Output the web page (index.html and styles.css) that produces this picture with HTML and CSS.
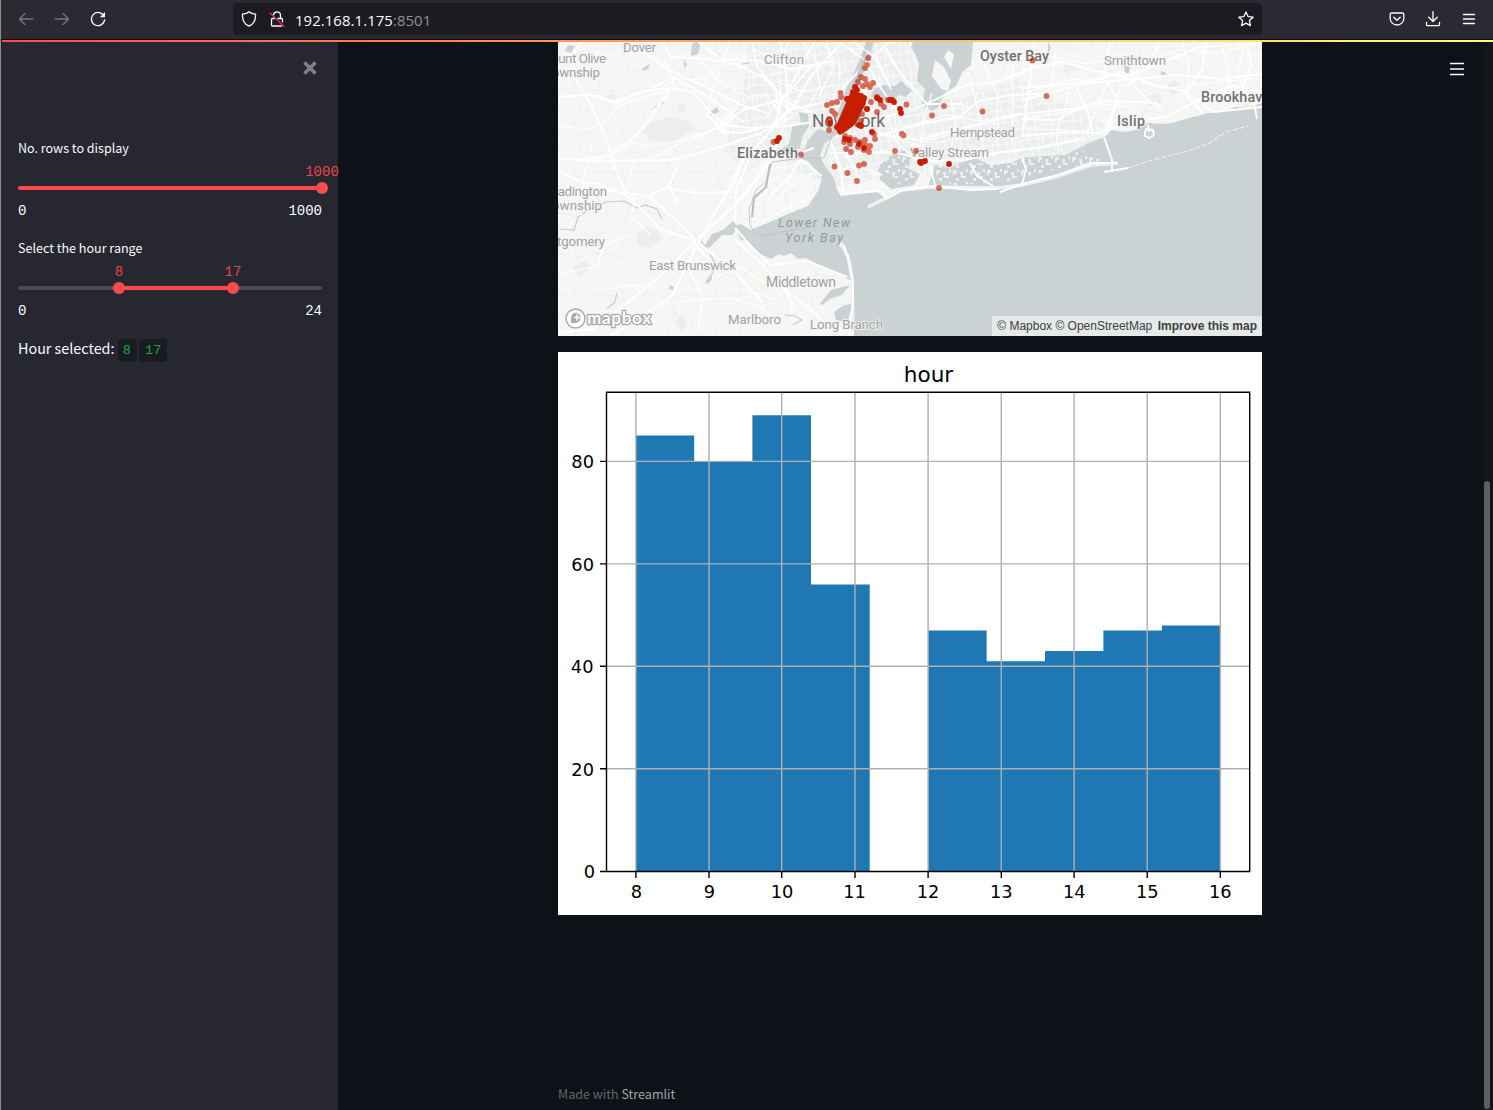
FILE: index.html
```html
<!DOCTYPE html>
<html lang="en">
<head>
<meta charset="utf-8">
<title>192.168.1.175:8501</title>
<link rel="stylesheet" href="styles.css">
</head>
<body>
<header class="toolbar">
  <div class="nav-icons">
    <svg class="icon dim" viewBox="0 0 16 16"><path d="M15 8H1.5M7 2.500 1.500 8 7 13.500"/></svg>
    <svg class="icon dim" viewBox="0 0 16 16"><path d="M1 8h13.500M9 2.500 14.500 8 9 13.500"/></svg>
    <svg class="icon" viewBox="0 0 16 16"><path d="M14 5.200A6.600 6.600 0 1 0 14.600 8.800"/><path class="solid" d="M15 1v5.200H9.800z"/></svg>
  </div>
  <div class="address">
    <svg class="icon" viewBox="0 0 16 16"><path d="M8 .8C6.500 2.200 4 2.900 1.500 3.200c-.3 5 1 9.500 6.500 12 5.500-2.500 6.800-7 6.500-12C12 2.900 9.500 2.200 8 .8z"/></svg>
    <svg class="icon lock" viewBox="0 0 16 16"><path d="M4.500 4C5 0 11.300-.3 11.500 4.300V7.500M9 7.500h3.500q1 0 1 1V11M5.500 7.500h-2q-1 0-1 1V14q0 1 1 1h9"/><path class="slash" d="m1 2 14 13.500"/></svg>
    <span class="url">192.168.1.175<span class="port">:8501</span></span>
    <svg class="icon star" viewBox="0 0 16 16"><path d="m8 1 2.100 4.600 5 .6-3.700 3.400 1 5L8 12.100l-4.400 2.500 1-5L.9 6.200l5-.6z"/></svg>
  </div>
  <div class="tools">
    <svg class="icon" viewBox="0 0 16 16"><path d="M2.500 2h11q1.300 0 1.300 1.300V7.500a6.800 6.500 0 0 1-13.600 0V3.300Q1.200 2 2.500 2zM4.800 6.200 8 9.200l3.200-3"/></svg>
    <svg class="icon" viewBox="0 0 16 16"><path d="M8 0v10.500M3.700 6.300 8 10.500l4.300-4.200M1.500 11.500v2q0 1.200 1.200 1.200h10.600q1.200 0 1.200-1.200v-2"/></svg>
    <svg class="icon" viewBox="0 0 16 16"><path d="M2.500 3.500h11M2.500 8h11M2.500 12.500h11"/></svg>
  </div>
</header>
<div class="decoration"></div>

<div class="app">
  <aside class="sidebar">
    <div class="close-row"><svg class="close" viewBox="0 0 14 14"><path d="m1.500 1.500 11 11m0-11-11 11"/></svg></div>
    <section class="slider">
      <div class="label">No. rows to display</div>
      <div class="track full"><span class="thumb end"><b>1000</b></span></div>
      <div class="bounds"><span>0</span><span>1000</span></div>
    </section>
    <section class="slider">
      <div class="label">Select the hour range</div>
      <div class="track range"><span class="thumb low"><b>8</b></span><span class="thumb high"><b>17</b></span></div>
      <div class="bounds"><span>0</span><span>24</span></div>
    </section>
    <p class="result">Hour selected: <code>8</code> <code>17</code></p>
  </aside>

  <main class="content">
    <div class="map">
      <svg class="canvas" viewBox="558 42 704 294">
        <defs>
          <pattern id="rural" width="47" height="41" patternUnits="userSpaceOnUse"><path class="local" d="M0 8 13 13 24 8 47 8M13 13 17 28 10 41M17 28 32 31 47 25M32 31 36 41M10 0 13 13M36 0 34 9"/></pattern>
          <pattern id="urban" width="23" height="21" patternUnits="userSpaceOnUse" patternTransform="rotate(-9)"><path class="street" d="M0 5H23M0 13 12 15 23 13M5 0 7 21M15 0 13 21M19 0v13"/></pattern>
          <pattern id="marsh" width="17" height="13" patternUnits="userSpaceOnUse"><path class="marsh" d="M1 1h4v3H3v2H1zM8 3h3v4h3v2H9zM4 9h3v3H4zM14 0h2v3h-2z"/></pattern>
        </defs>
        <rect class="land" x="558" y="42" width="704" height="294"/>
        <rect x="558" y="42" width="704" height="294" fill="url(#rural)"/>
        <g class="park">
          <path d="M650 123l18-6 22 4 4 8-20 13-24-1-6-9zM636 235l10-8 12 3 4 9-13 9-11-2zM573 267l13-7 5 8-13 9zM675 322l7-8 5 9-6 10zM677 106l6-4 4 8-8 3zM602 98l10-5 4 6-12 4zM1147 96l12-4 3 11-14 3zM1168 84l8-5 7 11-12 6zM1064 65l13-2 3 7-16 2zM696 235l8 3-2 8-9-3zM1236 111l9-8 9 5-5 13-13-1z"/>
        </g>
        <path class="built" d="M748 42h160l18 58 38-2 55-20 28 18 45 18 16 15-25 24-60 5-90 10-102 20-24-13-35-20-24 16-24-18 20-70z"/>
        <path d="M748 42h160l18 58 38-2 55-20 28 18 45 18 16 15-25 24-60 5-90 10-50 30-50-3-35 20-50 14-10-60-24-18 20-70z" fill="url(#urban)"/>

        <g class="water">
          <path d="M735 226 740 239 749 243 758 253 771 259 779 254 784 256 791 253 798 259 806 258 820 266 840 275 852 281 847 254 838 244 842 242 848 254 852 270 854 300 854 336H1262V103L1247 108 1235 107 1222 112 1208 113 1202 115 1189 118 1172 123 1163 124 1149 123 1136 130 1125 132 1112 130 1104 137 1089 143 1065 155 1045 156 1022 158 1010 163 990 165 975 158 960 163 950 168 935 165 928 187 905 188 887 199 877 192 841 196 837 190 834 178 825 166 820 156 824 144 837 134 838 128 828 132 818 129 808 140 803 152 800 159 808 161 816 170 822 179 818 191 808 206 788 214 770 222 751 230 741 224z"/>
          <path d="M866 42h8l-6 20-11 27-12 23-7 20-7-4 6-13 10-28 12-26zM793 124h8l-2-12 9 2 1 12-7 11-2 11-11 6-12-2 12-8zM913 42h60l-2 23-8 6-7 15-11 7-7 14-6 4-10-7 3-15-8-8 2-17-4-10-4-7zM874 89l10-4 10 1 8-5 5 6 5 3-6 7-8-2-4 8-9-3-5 4-9-8zM880 165l13-11 12-4 7 7-4 12 12 5-6 11-23 4-14-12z"/>
          <path d="M738 227l-6 8-10 0-13 13-4-3 7-11 11-4 10-9zM692 44l4-2h5l-3 12-7 2zM710 112l7-5 2 5-8 4zM643 68l7-4-2 5-6 2zM568 45l7 1-4 7-6-2zM670 285l4 2-1 3-4-1zM705 282l6-7 1 4-4 5zM684 59l3 6-3 3zM1124 65l6 2-1 6-4 2zM1161 71l5 2 1 4-6-2zM1048 42l3 5-3 7z"/>
          <path d="M820 304l11-14 19-5-8 10-12 4-8 6zM834 312l10-7 8-1 1 12-7 6-10-2z"/>
        </g>
        <path class="land" d="M935 60l9 7 7 14-3 10-7-2-9-13zM948 50l6 4-3 15-7-12zM872 170l9 3-2 9-8-2z"/>
        <path class="barrier" d="M868 207l18-9 16-8 30-3 65 1 25-3 33-8 36-12 27-2M841 243l7 14 4 22 1 40"/>
        <path d="M928 163l37 2 58-6 65-8 12 10-60 12-36 9-48 3-30-4zM878 160l31-8 7 24-21 10z" fill="url(#marsh)"/>
        <path class="stream" d="M559 229l15 1 4-13 11-8 17-7 18-1 13 7 8-3 12 4 5 10M607 309l8-7 2-9M701 241l8 10 7 15-8 15M785 315l10 1 7 4-9 5M655 107l9-5M742 64l6-1 2-4"/>

        <g class="minor">
          <path d="M558 125l28 5 18-7 15-17 22-8 29-8M590 95l25 9 37-9 23-16 31 1M592 145l-8 31-3 44M611 150l18-8 20 4 51-9 21-13 19-20M626 190l9-30 18-2 26-14M655 42l-1 14 15 10 6 23-14 14M700 60l17 20 31 17 18-3 12 17M720 74l-9 21-3 20 18 22M730 42l-8 22-7 17M650 234l-19-17 5-20M560 274l37-8 7-20 27-12M606 290l20-5 31 2M658 305l36-5 36-2 33 10 18 19M694 244l-5 25 14 28-5 35M717 276l24-8 24 15 17-4 11 34M736 300l20-7 18 6 14-11"/>
          <path d="M1020 59l28-4 35 9 38-5 27 2 29-11 40 3 37-9M1026 92l46-13 35 3 28-5 30 12 35-5 58-6M1107 83l-11 27-10 24M1123 83l-18 47M1182 42l7 21-3 28-12 13M1244 43l-7 31 13 30M1072 79l-7 28-9 26 3 20M1203 42v34M1056 48l-4 35-12 21M1022 118l52-7 36-7 24 4M1026 129l43 1 36 4M1140 61l-7 24 17 16 14 10M1223 48l7 32-9 29"/>
          <path d="M932 93l-8 25-3 28 15 12M949 91l6 32-4 28M968 72l9 34 6 42M984 63l13 32 1 53M1013 63l-1 83M902 128l45-13 33 6 42-8M910 145l42-11 66 4M887 114l10 29 14 12M868 132l30 7 26 8M822 42l18 24-2 27M803 42l13 18 4 26-15 27M777 82l28 10 29-7M755 50l28 15 26-8M826 43l8 24-15 29M788 42l-9 29 2 26-16 22M838 170l17-4 28 9M840 184l24-5 14 6M770 208l18-20 25-14M762 222l33-18 20-8"/>
        </g>
        <g class="major">
          <path d="M558 97l27-2 12 1 19 6 28-11 26-3 23 4 18 21 15 12 24 3 38-2 37-6M663 42l8 15 38 2 29 6 27 13 22 25 26 10M630 42l13 10 24 17 40 19 37 18 23 7M669 90l-25 37-19 20-23 11-22 1M558 158l32 3 82-1 51-14 38-13 31-16M581 42l-9 14 6 28 14 22 16 37 7 25 9 21 11 10M558 170l23 12 18 2 19 8 31 4 27 24 15 15 15 14 29 23 28 31M641 199l25-11 30 5 36-1M611 336l60-39 20-40 27-50 17-25 12-38M558 333l35-4 67-52 36-37 45-40 35-45M592 190l29 2 22 18 17 19 31 10 17 20M678 204l-9-18 8-20M735 221l1-30 16-39 23-26 6-24 31-37M735 240l22 19 14 15 10 10 14 23M735 228l15 17 20 20 37-4 40 16M770 272l20 22 32 25"/>
          <path d="M710 117l16 15 15 1 33-8 15-16M653 88l20-11 33 19 38 26M692 137l28-10 23-17 33-9 18 9M698 42l23 17 40 2 30 8 43-8M752 42l5 24 18 22 5 24-14 25-22 22-16 29M780 42l6 30 2 32-7 35-32 50-14 14M814 42l-22 41-16 27M842 42l-31 34-20 34-21 18M790 110l40-9 31-32 28-27M839 42l26 18 17 30 16 21M854 42l22 16 15 31M884 45l16 28 27 31 35 0M800 153l14-5M855 124l29-7 29-7 53-25 29-3 34-12M855 144l33-11 34-9 37-7 20-16 32-6 37-2M830 153l33 0 30-1 37 9 35-1 36-8 44-5 38-9M845 152l10 18 6 21M859 124l26 11 33 5 57-15 48-11 56-6M770 196l20-19 10-18 22 17M830 140l10 26 4 26"/>
          <path d="M1022 88l37-3 40-6 23-7 30 13 33 6 28 21 49-5M1022 101l59-17 44-4 51-5 45 4 41-5M1022 70l39-8 34 9 28 6 36-13 41-17 62-4M1022 136l44-4 31 1 27-9 44-8 26-14 38-16 30 5M1022 119l35 1 26-14 26-5 49 2M1034 42l-4 40-8 55M1075 83l14 33 4 20M1110 43l-7 35 15 20-12 37M1159 42l-8 22-14 13-12 10M1207 42l-5 27-17 25 18 19M1247 42l4 24-14 37M1254 103l3 16M1104 137l8 23v12M886 199l16-9 30-4 39 4 26-1M1000 192l22-8 36-9 33-12 24 0"/>
          <path d="M1104 172l24-4M844 245l6 18 3 20v22l-4 17 1 14M840 194l37-3M877 188l10 11M1022 156l4 14-4 14M930 166l5 19M970 163l7 13 16 10M1149 132l-1-7M1145 133l1-4 7 1 1 5-5 3-4-2z"/>
        </g>
        <path class="dune" d="M1128 168l25-8 31-8 24-8 18-12 22-6"/>
        <path class="border" d="M868 42l-12 37-18 40-14 39-22 0-30 4-6 20-10 8-7 20 1 15 5 8 8 3 24-5 24-4"/>
        <path class="border thick" d="M866 57l-10 25M770 164l-4 23-12 11-2 19"/>

        <g class="place">
          <text x="623" y="52" textLength="33">Dover</text>
          <text x="551" y="63" textLength="55">ount Olive</text>
          <text x="552" y="77" textLength="48">ownship</text>
          <text x="764" y="64" textLength="40">Clifton</text>
          <text x="1104" y="65" textLength="62">Smithtown</text>
          <text x="950" y="137" textLength="65">Hempstead</text>
          <text x="910" y="157" textLength="79">Valley Stream</text>
          <text x="551" y="196" textLength="56">eadington</text>
          <text x="552" y="210" textLength="50">ownship</text>
          <text x="557" y="246" textLength="48">tgomery</text>
          <text x="649" y="270" textLength="87">East Brunswick</text>
          <text x="766" y="287" textLength="70" class="medium">Middletown</text>
          <text x="728" y="324" textLength="53">Marlboro</text>
          <text x="810" y="329" textLength="73">Long Branch</text>
        </g>
        <g class="place city">
          <text x="737" y="158" textLength="61">Elizabeth</text>
          <text x="980" y="61" textLength="69">Oyster Bay</text>
          <text x="1117" y="126" textLength="28">Islip</text>
          <text x="1201" y="102" textLength="69">Brookhave</text>
          <text x="812" y="126.500" textLength="73" class="metro">New York</text>
        </g>
        <g class="sea"><text x="778" y="227" textLength="72">Lower New</text><text x="785" y="242" textLength="58">York Bay</text></g>

        <path class="pickup" d="M868.500 58h.01M867 65h.01M865 68h.01M861 77h.01M865 79h.01M873 83h.01M867 84h.01M870 87h.01M858 82h.01M863 86h.01M840.500 93h.01M841 97h.01M827 105h.01M832 103h.01M837 102h.01M832 111h.01M835 114h.01M829 119h.01M829 130h.01M871 102h.01M867 109h.01M862 114h.01M861 121h.01M877 112h.01M877 97h.01M881 104h.01M884 107h.01M888 100h.01M906.500 104.500h.01M944 106h.01M932 115.500h.01M982.500 111.500h.01M1032.500 60.500h.01M1046.500 96h.01M895 151h.01M916 151h.01M902 134h.01M903.500 135.500h.01M874 134h.01M875 139h.01M865 140h.01M870 146h.01M869 152h.01M868 149h.01M864 150h.01M846 149h.01M851 152h.01M834.500 166.500h.01M847.500 173h.01M857 181h.01M859 165.500h.01M864 164h.01M939 188h.01M773.500 142h.01M801 154.500h.01M845 136h.01M850 138h.01M855 140h.01M860 142h.01M865 145h.01M844 142h.01M850 144h.01M858 147h.01"/>
        <path class="trips" d="M852 95l7 0 5 3-1 6-6 10-4 9-8 6-5 3-2-4 5-12z"/>
        <path class="pickup dense" d="M855 87h.01M857 90h.01M853 92h.01M847 99h.01M861 96h.01M859 103h.01M864 98h.01M840 131h.01M837 127h.01M830 123h.01M861 126h.01M859 125h.01M872 132h.01M877 98h.01M880 100h.01M890 100h.01M892 100h.01M894 102h.01M900 109h.01M901 113h.01M867 109h.01M845 139h.01M849 140h.01M859 144h.01M864 148h.01M920 162h.01M922 162h.01M925 161h.01M921 163h.01M949 164h.01M779 138h.01M777 141h.01"/>
        <g class="logo"><circle cx="575.500" cy="318.500" r="9.500"/><path d="M571 323v-5q1-6 6-5 5 2 3 7-3 4-9 3z"/><path class="spark" d="M577 314.500v6m-3-3h6"/><text x="587" y="323.500" textLength="64">mapbox</text></g>
      </svg>
      <div class="attribution">© Mapbox © OpenStreetMap <b>Improve this map</b></div>
    </div>

    <svg class="chart" viewBox="558 352 704 563">
      <rect class="paper" x="558" y="352" width="704" height="563"/>
      <g class="bars"><path d="M636 871.500V435.600h58.200v25.700h58.200v-46.100h58.600v169.200h58.700v287.100zM928.200 871.500V630.500h58.400v30.700h58.400v-10.200h58.400v-20.500h58.500v-5.100h58.300v246.100z"/></g>
      <path class="grid" d="M635.900 392v479.500M709 392v479.500M781.700 392v479.500M855 392v479.500M928.100 392v479.500M1001.300 392v479.500M1074.100 392v479.500M1147.200 392v479.500M1220.300 392v479.500M606.500 461.400h643.300M606.500 563.900h643.300M606.500 666.300h643.300M606.500 768.700h643.300"/>
      <path class="axis" d="M606.500 392.200h643.200v479.300H606.500zM635.900 871.500v6.500M709 871.500v6.500M781.700 871.500v6.500M855 871.500v6.500M928.100 871.500v6.500M1001.300 871.500v6.500M1074.100 871.500v6.500M1147.200 871.500v6.500M1220.300 871.500v6.500M606.500 461.400H600M606.500 563.900H600M606.500 666.300H600M606.500 768.700H600M606.500 871.500H600"/>
      <g class="ticks">
        <text x="636.300" y="898">8</text><text x="709.500" y="898">9</text><text x="782" y="898">10</text><text x="854.500" y="898">11</text><text x="928" y="898">12</text><text x="1001.300" y="898">13</text><text x="1074.300" y="898">14</text><text x="1147.300" y="898">15</text><text x="1220.300" y="898">16</text>
      </g>
      <g class="ticks y"><text x="594" y="468">80</text><text x="594" y="570.500">60</text><text x="593.500" y="673">40</text><text x="594" y="775.500">20</text><text x="595" y="878">0</text></g>
      <text class="title" x="928.500" y="381.500">hour</text>
    </svg>
    <footer>Made with <a>Streamlit</a></footer>
  </main>
  <svg class="menu" viewBox="0 0 14 14"><path d="M0 1.500h14M0 7h14M0 12.500h14"/></svg>
  <div class="scrollbar"><div class="handle"></div></div>
</div>
</body>
</html>
```

FILE: styles.css
```css
* { box-sizing: border-box; }
body {
  margin: 0;
  height: 1110px;
  overflow: hidden;
  display: flex;
  flex-direction: column;
  background: #0e1117;
  color: #fafafa;
  font-family: "Noto Sans CJK SC", "Noto Sans", sans-serif;
  border-left: 1px solid #8c8c8a;
}

/* Browser toolbar */
.toolbar {
  height: 40px;
  flex: none;
  display: flex;
  align-items: center;
  background: #2b2a33;
  border-bottom: 1px solid #0c0c0d;
  padding: 0 16px 1px;
}
.icon { width: 16px; height: 16px; flex: none; fill: none; stroke: #fbfbfe; stroke-width: 1.3; stroke-linecap: round; stroke-linejoin: round; }
.icon.dim { stroke: #77767d; }
.icon .solid { fill: #fbfbfe; stroke: none; }
.icon .slash { stroke: #e22850; }
.nav-icons { display: flex; gap: 20px; width: 216px; flex: none; padding-left: 1px; }
.address { width: 1029px; height: 32px; display: flex; align-items: center; background: #1c1b22; border-radius: 4px; padding: 0 8px; }
.lock { margin-left: 12px; }
.url { flex: 1; margin-left: 10px; font: 14.9px/20px "Open Sans", "Noto Sans", sans-serif; letter-spacing: .08px; padding-top: 2px; }
.port { color: #8f8f96; }
.tools { display: flex; gap: 20px; margin-left: auto; }
.decoration { height: 2px; flex: none; margin-left: 1px; background: linear-gradient(90deg, #ff4b4b, #ffa866 48%, #fffd80); }

.app { flex: 1; display: flex; min-height: 0; }

/* Sidebar */
.sidebar { width: 337px; flex: none; background: #262730; padding: 0 16px 0 17px; }
.close-row { height: 96px; display: flex; justify-content: flex-end; padding: 19px 5px 0 0; }
.close { width: 14px; height: 14px; fill: none; stroke: #808187; stroke-width: 3.6; }
.slider { height: 100px; }
.label { height: 20px; font-size: 12.55px; line-height: 20px; white-space: nowrap; }
.track { position: relative; height: 4px; margin: 28px 0 12px; border-radius: 2px; background: #4b4d57; }
.full { background: #ff4b4b; }
.range { background: linear-gradient(90deg, #494b55 33.200%, #ff4b4b 33.200% 70.700%, #494b55 70.700%); }
.thumb { position: absolute; top: -4px; width: 12px; height: 12px; border-radius: 50%; background: #ff4b4b; display: flex; justify-content: center; }
.end { left: 298px; }
.low { left: 95px; }
.high { left: 209px; }
.thumb b { position: relative; top: -18px; height: 16px; font: 14px/16px "Liberation Mono", monospace; color: #ff4b4b; opacity: .88; }
.bounds { display: flex; justify-content: space-between; font: 14px/18px "Liberation Mono", monospace; }
.result { margin: -3px 0 0; font-size: 14.35px; line-height: 26px; white-space: nowrap; }
.result code { display: inline-block; font: 13.600px/23px "Liberation Mono", monospace; height: 23px; color: #12a644; background: #1a1c24; border-radius: 4px; padding: 0 6px 0 5px; margin-right: -1px; }
.result code:last-child { padding: 0 6px; }

/* Main column */
.content { width: 704px; margin-left: 220px; flex: none; display: flex; flex-direction: column; }
.map { position: relative; height: 294px; overflow: hidden; flex: none; }
.canvas, .chart { display: block; width: 100%; height: 100%; }
.land { fill: #f6f6f4; }
.built { fill: #edefee; }
.park { fill: #ededeb; }
.water { fill: #cad2d3; }
.marsh { fill: #ebefef; }
.local, .street, .minor, .major, .border, .stream, .dune, .barrier { fill: none; }
.local { stroke: #eceeed; stroke-width: .7; }
.street { stroke: #fafbfa; stroke-width: 1; }
.minor { stroke: #fff; stroke-width: 1.200; stroke-linejoin: round; }
.major { stroke: #fff; stroke-width: 1.900; stroke-linejoin: round; }
.stream { stroke: #c3cdcf; stroke-width: 1.200; }
.barrier { stroke: #f0f2f1; stroke-width: 3.5; stroke-linejoin: round; }
.dune { stroke: #eef1f0; stroke-width: 1.100; stroke-dasharray: 5 2; }
.border { stroke: #bfc2c2; stroke-width: .9; }
.border.thick { stroke: #b7bdbe; stroke-width: 2; }
.place { font: 13.300px Roboto, sans-serif; fill: #a1a1a1; stroke: #f6f6f4; stroke-width: 1.5px; paint-order: stroke; }
.place .medium { font-size: 14px; }
.place.city { font-size: 14.300px; fill: #717171; font-weight: 500; }
.place .metro { font-size: 17.500px; font-weight: 400; fill: #6c6c6c; }
.sea { font: italic 12.500px Roboto, sans-serif; fill: #8d9a9d; }
.pickup { fill: none; stroke: #c81e00; stroke-width: 5.800; stroke-linecap: round; opacity: .64; }
.dense { opacity: 1; }
.trips { fill: #c81e00; stroke: #c81e00; stroke-width: 5; stroke-linejoin: round; }
.logo { fill: #fff; stroke: #aaa; stroke-width: 1.500; }
.logo path { fill: #aaa; stroke: none; }
.logo .spark { stroke: #fff; stroke-width: 1.500; }
.logo text { font: bold 17px Lato, sans-serif; paint-order: stroke; stroke: #a4a6a6; stroke-width: 2.500; stroke-linejoin: round; }
.attribution { position: absolute; right: 0; bottom: 0; height: 20px; padding: 0 5px; background: rgba(255,255,255,.5); color: #404040; font: 12px/20px "Liberation Sans", Arial, sans-serif; white-space: nowrap; }
.attribution b { margin-left: 2px; }

.chart { height: 563px; margin-top: 16px; flex: none; font-family: "DejaVu Sans", sans-serif; }
.paper { fill: #fff; }
.bars { fill: #1f77b4; }
.grid { fill: none; stroke: #b0b0b0; stroke-width: 1.400; }
.axis { fill: none; stroke: #000; stroke-width: 1.400; }
.ticks { font-size: 17.800px; text-anchor: middle; }
.ticks.y { text-anchor: end; }
.title { font-size: 21.600px; text-anchor: middle; }
footer { margin-top: 169px; font-size: 12.55px; line-height: 20px; color: #64656a; }
footer a { color: #a3a4a8; }
.menu { width: 14px; height: 14px; margin: 20px 0 0 188px; fill: none; stroke: #fafafa; stroke-width: 1.600; }
.scrollbar { width: 11px; flex: none; margin-left: auto; background: #131417; padding: 439px 3px 0 2px; }
.handle { height: 628px; border-radius: 3px; background: #5e5e61; }
```
